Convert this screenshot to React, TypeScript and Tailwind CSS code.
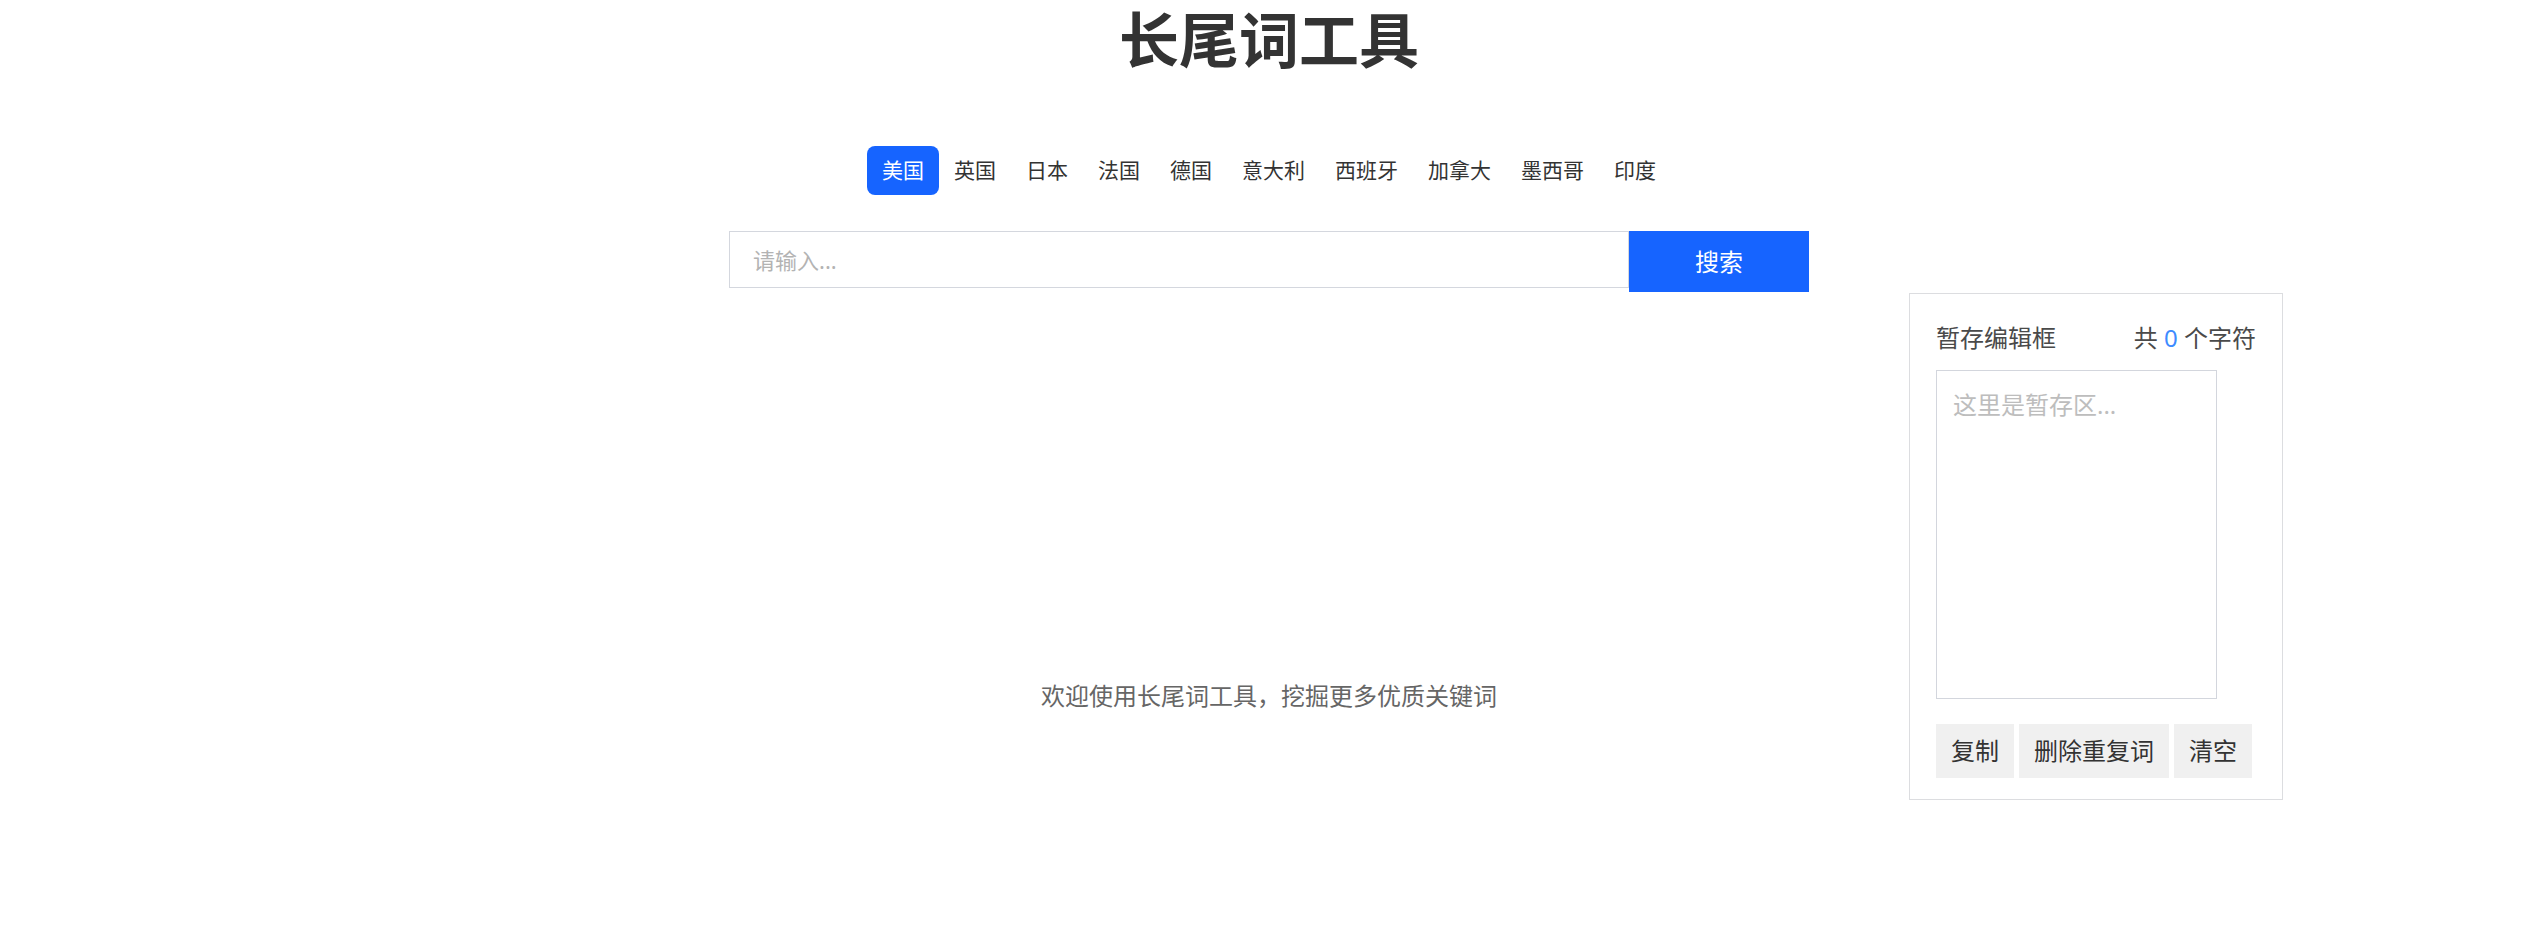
import { useState } from 'react';

const COUNTRIES = ['美国', '英国', '日本', '法国', '德国', '意大利', '西班牙', '加拿大', '墨西哥', '印度'];

const FONT = "font-['Noto_Sans','Noto_Sans_CJK_SC',sans-serif]";

function Sidebar() {
  const [text, setText] = useState('');

  return (
    <div className="ml-[100px] mt-[62px] w-[374px] border border-[#dcdde0] bg-white px-[26px] pt-[26px] pb-[21px]">
      <div className="flex h-[36px] items-center justify-between text-[24px] leading-[36px] text-[#4a4a4a]">
        <span>暂存编辑框</span>
        <span>
          共 <span className="text-[#3d8bff]">{text.length}</span> 个字符
        </span>
      </div>
      <textarea
        value={text}
        onChange={(e) => setText(e.target.value)}
        placeholder="这里是暂存区..."
        className="mt-[14px] block h-[329px] w-[281px] resize-none border border-[#d3d6dd] px-[16px] py-[16px] text-[24px] leading-[36px] text-[#333] outline-none placeholder:text-[#bdbdbd]"
      />
      <div className="mt-[25px] flex gap-[5px]">
        {['复制', '删除重复词', '清空'].map((label) => (
          <button
            key={label}
            className="h-[54px] bg-[#f0f0f0] px-[15px] text-[24px] text-[#333] hover:bg-[#e6e6e6]"
          >
            {label}
          </button>
        ))}
      </div>
    </div>
  );
}

export default function App() {
  const [active, setActive] = useState(0);
  const [query, setQuery] = useState('');

  return (
    <div className={`min-h-screen bg-white ${FONT}`}>
      <h1 className="flex h-[80px] items-center justify-center text-[60px] font-bold text-[#333]">长尾词工具</h1>

      <div className="mt-[66px] flex justify-center">
        {COUNTRIES.map((name, i) => (
          <button
            key={name}
            onClick={() => setActive(i)}
            className={
              i === active
                ? 'h-[49px] rounded-[8px] bg-[#1664ff] px-[15px] text-[21px] text-white'
                : 'h-[49px] rounded-[8px] px-[15px] text-[21px] text-[#333] hover:text-[#1664ff]'
            }
          >
            {name}
          </button>
        ))}
      </div>

      <div className="mt-[36px] grid grid-cols-[1fr_1080px_1fr]">
        <div />
        <div>
          <div className="flex items-start">
            <input
              value={query}
              onChange={(e) => setQuery(e.target.value)}
              placeholder="请输入..."
              className="h-[57px] w-[900px] border border-[#d4d7de] px-[23px] text-[22px] text-[#333] outline-none placeholder:text-[#b3b3b3]"
            />
            <button className="h-[61px] w-[180px] bg-[#1664ff] text-[24px] text-white">搜索</button>
          </div>
          <p className="mt-[386px] text-center text-[24px] leading-[36px] text-[#666]">
            欢迎使用长尾词工具，挖掘更多优质关键词
          </p>
        </div>
        <div>
          <Sidebar />
        </div>
      </div>
    </div>
  );
}
